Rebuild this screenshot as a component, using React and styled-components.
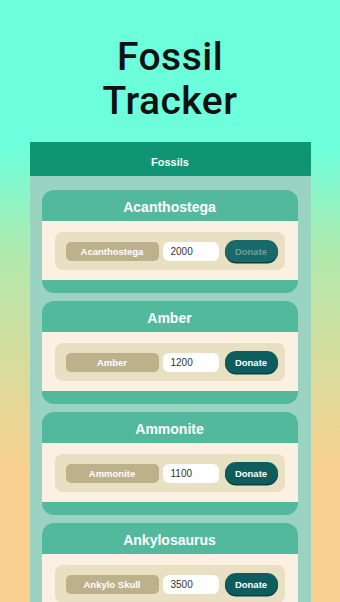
import React from "react";
import styled, { createGlobalStyle } from "styled-components";

const Global = createGlobalStyle`
  html, body { margin: 0; padding: 0; }
  body {
    font-family: "Liberation Sans", Arial, sans-serif;
    background: linear-gradient(180deg, #6dffdc 145px, #b2e9ad 255px, #e4d897 400px, #f9d08f 470px);
    min-height: 100vh;
  }
`;

const Page = styled.div`
  min-height: 100vh;
  display: flex;
  flex-direction: column;
  align-items: center;
  padding-top: 35px;
`;

const Title = styled.h1`
  margin: 0 0 19px;
  font-family: Roboto, "Liberation Sans", Arial, sans-serif;
  font-weight: 500;
  font-size: 39px;
  line-height: 44px;
  letter-spacing: 0.5px;
  color: #111;
  text-align: center;
`;

const Panel = styled.section`
  width: 281px;
  background: #9bd3c3;
`;

const PanelHeader = styled.div`
  height: 34px;
  box-sizing: border-box;
  padding-top: 5px;
  background: #0f9474;
  color: #fff;
  display: flex;
  align-items: center;
  justify-content: center;
  font-weight: 700;
  font-size: 11px;
`;

const CardList = styled.div`
  display: flex;
  flex-direction: column;
  gap: 8px;
  padding: 14px 13px 14px 12px;
`;

const Card = styled.div`
  background: #53b99c;
  border-radius: 12px;
  overflow: hidden;
  padding-bottom: 13px;
`;

const CardTitle = styled.div`
  height: 31px;
  display: flex;
  align-items: center;
  justify-content: center;
  color: #fff;
  font-weight: 700;
  font-size: 14px;
  padding-top: 2px;
  box-sizing: border-box;
`;

const CardBody = styled.div`
  background: #fbf0e1;
  padding: 11px 13px 10px;
`;

const Row = styled.div`
  background: #e9dfc2;
  border-radius: 8px;
  height: 38px;
  display: flex;
  align-items: center;
  padding: 0 7px 0 11px;
`;

const Label = styled.div`
  width: 93px;
  height: 19px;
  border-radius: 5px;
  background: #bdb18c;
  color: #fff;
  font-weight: 700;
  font-size: 9.5px;
  display: flex;
  align-items: center;
  justify-content: center;
  flex-shrink: 0;
`;

const Amount = styled.input`
  width: 56px;
  height: 19px;
  margin-left: 4px;
  border: none;
  border-radius: 6px;
  background: #fff;
  box-sizing: border-box;
  padding: 0 8px;
  font-family: "Liberation Sans", Arial, sans-serif;
  font-size: 10px;
  color: #333;
  outline: none;
`;

const DonateButton = styled.button`
  margin-left: 6px;
  width: 53px;
  height: 22px;
  border: none;
  border-radius: 11px;
  background: ${(p) => (p.disabled ? "#18696a" : "#0d5c5e")};
  color: ${(p) => (p.disabled ? "#6f9c98" : "#fff")};
  box-shadow: 0 1.5px 0 #083f40;
  font-family: "Liberation Sans", Arial, sans-serif;
  font-weight: 700;
  font-size: 9.5px;
  padding: 0;
  cursor: pointer;
`;

const fossils = [
  { name: "Acanthostega", label: "Acanthostega", value: "2000", disabled: true },
  { name: "Amber", label: "Amber", value: "1200" },
  { name: "Ammonite", label: "Ammonite", value: "1100" },
  { name: "Ankylosaurus", label: "Ankylo Skull", value: "3500" },
];

export default function App() {
  return (
    <>
      <Global />
      <Page>
        <Title>
          Fossil
          <br />
          Tracker
        </Title>
        <Panel>
          <PanelHeader>Fossils</PanelHeader>
          <CardList>
            {fossils.map((f) => (
              <Card key={f.name}>
                <CardTitle>{f.name}</CardTitle>
                <CardBody>
                  <Row>
                    <Label>{f.label}</Label>
                    <Amount defaultValue={f.value} />
                    <DonateButton disabled={f.disabled}>Donate</DonateButton>
                  </Row>
                </CardBody>
              </Card>
            ))}
          </CardList>
        </Panel>
      </Page>
    </>
  );
}
